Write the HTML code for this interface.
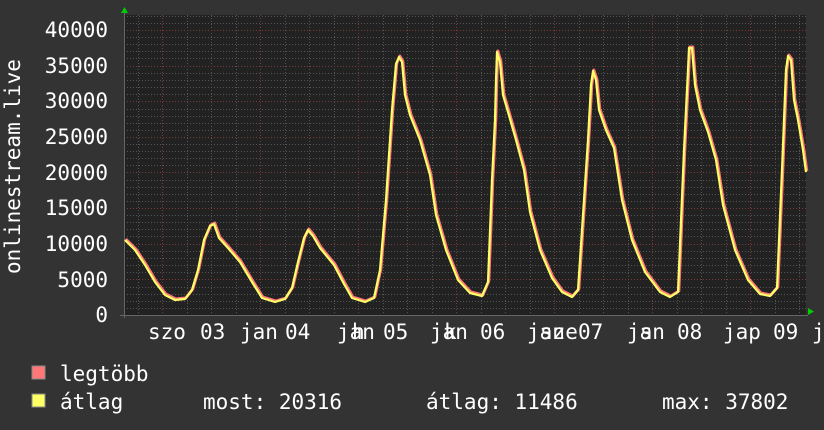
<!DOCTYPE html>
<html><head><meta charset="utf-8"><style>
html,body{margin:0;padding:0;background:#333;}
svg{display:block}
text{font-family:"DejaVu Sans Mono","Liberation Mono",monospace;fill:#fff;font-size:21px}
</style></head><body>
<svg width="824" height="430" xmlns="http://www.w3.org/2000/svg">
<rect width="824" height="430" fill="#333"/>
<rect x="124" y="15" width="682" height="300" fill="#222"/>
<g stroke="#555" stroke-width="1" stroke-dasharray="1,2">
<path d="M124 308.5H806M124 301.5H806M124 294.5H806M124 287.5H806M124 272.5H806M124 265.5H806M124 258.5H806M124 251.5H806M124 236.5H806M124 229.5H806M124 222.5H806M124 215.5H806M124 201.5H806M124 194.5H806M124 187.5H806M124 180.5H806M124 165.5H806M124 158.5H806M124 151.5H806M124 144.5H806M124 130.5H806M124 123.5H806M124 116.5H806M124 109.5H806M124 94.5H806M124 87.5H806M124 80.5H806M124 73.5H806M124 58.5H806M124 51.5H806M124 44.5H806M124 37.5H806M124 23.5H806M124 16.5H806"/>
<path d="M138.5 15V315M187.5 15V315M211.5 15V315M236.5 15V315M285.5 15V315M309.5 15V315M334.5 15V315M383.5 15V315M407.5 15V315M432.5 15V315M481.5 15V315M505.5 15V315M530.5 15V315M579.5 15V315M603.5 15V315M628.5 15V315M677.5 15V315M701.5 15V315M726.5 15V315M775.5 15V315M799.5 15V315"/>
</g>
<g stroke="#7a3a3a" stroke-width="1" stroke-dasharray="1,2">
<path d="M124 279.5H806M124 244.5H806M124 208.5H806M124 172.5H806M124 137.5H806M124 101.5H806M124 66.5H806M124 30.5H806"/>
<path d="M162.5 15V315M260.5 15V315M358.5 15V315M456.5 15V315M554.5 15V315M652.5 15V315M750.5 15V315"/>
</g>
<path d="M120 315.5H808M124.5 12V318" stroke="#666" stroke-width="1"/>
<polygon points="121,13 128,13 124.5,7" fill="#0c0"/>
<polygon points="808,308 808,315 814,311.5" fill="#0c0"/>
<g fill="none" stroke-linejoin="round">
<polyline stroke="#f77" stroke-width="3" transform="translate(0.8,-1)" points="125,240 135,250 145,265 155,282 165,295 175,300 185,299 192,290 198,270 204,240 210,226 214,224 219,238 228,248 240,262 252,282 262,298 275,302 285,299 292,288 298,262 304,238 308,230 313,236 320,248 334,265 344,284 352,298 365,302 374,298 380,270 386,200 392,110 396,64 399,57 402,62 405,95 410,115 420,140 430,175 436,215 446,250 458,280 470,293 482,296 488,282 492,180 495,120 496,80 497,52 500,62 503,95 508,112 516,140 524,170 530,212 540,250 552,278 562,292 572,297 578,290 584,200 588,140 591,85 593,71 596,80 599,110 606,130 614,148 622,200 632,240 645,272 660,292 670,297 678,292 684,150 688,70 689,48 692,48 695,85 700,110 708,132 716,160 723,205 735,250 748,280 760,294 770,296 777,288 782,170 786,70 788,56 791,60 794,100 798,120 803,150 806,172"/>
<polyline stroke="#ff6" stroke-width="2.2" points="125,240 135,250 145,265 155,282 165,295 175,300 185,299 192,290 198,270 204,240 210,226 214,224 219,238 228,248 240,262 252,282 262,298 275,302 285,299 292,288 298,262 304,238 308,230 313,236 320,248 334,265 344,284 352,298 365,302 374,298 380,270 386,200 392,110 396,64 399,57 402,62 405,95 410,115 420,140 430,175 436,215 446,250 458,280 470,293 482,296 488,282 492,180 495,120 496,80 497,52 500,62 503,95 508,112 516,140 524,170 530,212 540,250 552,278 562,292 572,297 578,290 584,200 588,140 591,85 593,71 596,80 599,110 606,130 614,148 622,200 632,240 645,272 660,292 670,297 678,292 684,150 688,70 689,48 692,48 695,85 700,110 708,132 716,160 723,205 735,250 748,280 760,294 770,296 777,288 782,170 786,70 788,56 791,60 794,100 798,120 803,150 806,172"/>
</g>
<g text-anchor="end">
<text x="108" y="37">40000</text><text x="108" y="73">35000</text><text x="108" y="108">30000</text><text x="108" y="144">25000</text><text x="108" y="180">20000</text><text x="108" y="215">15000</text><text x="108" y="251">10000</text><text x="108" y="287">5000</text><text x="108" y="322">0</text>
</g>
<text transform="translate(20,274) rotate(-90)" >onlinestream.live</text>
<g>
<text x="148" y="339">szo</text><text x="200" y="339">03</text><text x="240" y="339">jan</text><text x="285" y="339">04</text>
<text x="337" y="339">jan</text><text x="352" y="339">h</text><text x="383" y="339">05</text>
<text x="430" y="339">jan</text><text x="444" y="339">k</text><text x="480" y="339">06</text>
<text x="527" y="339">jan</text><text x="540" y="339">sze</text><text x="578" y="339">07</text>
<text x="627" y="339">jan</text><text x="640" y="339">s</text><text x="677" y="339">08</text>
<text x="723" y="339">jap</text><text x="773" y="339">09</text><text x="812" y="339">j</text>
</g>
<rect x="32" y="366" width="13" height="13" fill="#f77" stroke="#888"/>
<rect x="32" y="394" width="13" height="13" fill="#ff6" stroke="#888"/>
<text x="60" y="381">legtöbb</text>
<text x="60" y="409">átlag</text>
<text x="203" y="409">most: 20316</text>
<text x="426" y="409">átlag: 11486</text>
<text x="662" y="409">max: 37802</text>
</svg>
</body></html>
